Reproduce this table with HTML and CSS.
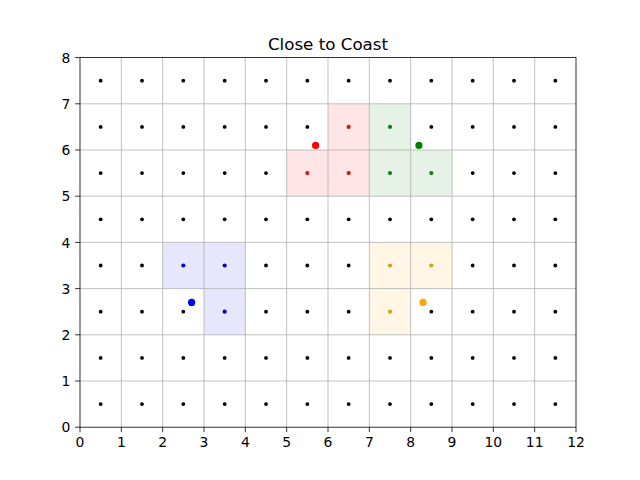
FILE: index.html
```html
<!DOCTYPE html>
<html>
<head>
<meta charset="utf-8">
<title>Close to Coast</title>
<link rel="stylesheet" href="styles.css">
</head>
<body>
<div class="figure">
<svg id="chart" class="chart" width="640" height="480" viewBox="0 0 640 480" xmlns="http://www.w3.org/2000/svg">
  <g id="cells"></g>
  <g id="grid" class="grid"></g>
  <g id="dots"></g>
  <g id="big"></g>
  <rect class="spine" x="80" y="57.6" width="496" height="369.6"></rect>
  <g id="ticks" class="ticks"></g>
  <g id="labels" class="labels"></g>
  <text class="title" x="328" y="49.5" text-anchor="middle">Close to Coast</text>
</svg>
</div>
<script src="script.js"></script>
</body>
</html>
```
FILE: styles.css
```css
html, body {
  margin: 0;
  padding: 0;
  background: #ffffff;
}
.figure {
  width: 640px;
  height: 480px;
  overflow: hidden;
}
.chart {
  display: block;
  font-family: "DejaVu Sans", "Liberation Sans", sans-serif;
}
.grid line {
  stroke: #b0b0b0;
  stroke-width: 0.8;
}
.spine {
  fill: none;
  stroke: #000000;
  stroke-width: 0.8;
}
.ticks line {
  stroke: #000000;
  stroke-width: 0.8;
}
.labels text {
  font-size: 13.9px;
  fill: #000000;
}
.title {
  font-size: 16.7px;
  fill: #000000;
}
```
FILE: script.js
```js
(function () {
  var NS = "http://www.w3.org/2000/svg";
  function X(x) { return 80 + x * 496 / 12; }
  function Y(y) { return 427.2 - y * 369.6 / 8; }
  function el(name, attrs, parent) {
    var e = document.createElementNS(NS, name);
    for (var k in attrs) e.setAttribute(k, attrs[k]);
    parent.appendChild(e);
    return e;
  }
  var groups = [
    { fill: "#ffe5e5", dot: "#cc1a1a", big: "#ff0000", bx: 5.7, by: 6.1,
      cells: [[5,5],[6,5],[6,6]] },
    { fill: "#e5f2e5", dot: "#1a7a1a", big: "#008000", bx: 8.2, by: 6.1,
      cells: [[7,5],[7,6],[8,5]] },
    { fill: "#e6e6fc", dot: "#0000d0", big: "#0000ff", bx: 2.7, by: 2.7,
      cells: [[2,3],[3,3],[3,2]] },
    { fill: "#fff6e5", dot: "#d0a020", big: "#ffa500", bx: 8.3, by: 2.7,
      cells: [[7,2],[7,3],[8,3]] }
  ];
  var cellsG = document.getElementById("cells");
  var gridG = document.getElementById("grid");
  var dotsG = document.getElementById("dots");
  var bigG = document.getElementById("big");
  var ticksG = document.getElementById("ticks");
  var labelsG = document.getElementById("labels");
  var colorOf = {};
  groups.forEach(function (g) {
    g.cells.forEach(function (c) {
      el("rect", { x: X(c[0]), y: Y(c[1] + 1), width: X(1) - X(0), height: Y(0) - Y(1), fill: g.fill }, cellsG);
      colorOf[c[0] + "," + c[1]] = g.dot;
    });
  });
  var i;
  for (i = 1; i < 12; i++) el("line", { x1: X(i), y1: Y(0), x2: X(i), y2: Y(8) }, gridG);
  for (i = 1; i < 8; i++) el("line", { x1: X(0), y1: Y(i), x2: X(12), y2: Y(i) }, gridG);
  for (var cx = 0; cx < 12; cx++) {
    for (var cy = 0; cy < 8; cy++) {
      var key = cx + "," + cy;
      var col = colorOf[key] || "#000000";
      el("circle", { cx: X(cx + 0.5), cy: Y(cy + 0.5), r: colorOf[key] ? 2.1 : 1.9, fill: col }, dotsG);
    }
  }
  groups.forEach(function (g) {
    el("circle", { cx: X(g.bx), cy: Y(g.by), r: 3.6, fill: g.big }, bigG);
  });
  for (i = 0; i <= 12; i++) {
    el("line", { x1: X(i), y1: Y(0), x2: X(i), y2: Y(0) + 4.9 }, ticksG);
    var t = el("text", { x: X(i), y: 447, "text-anchor": "middle" }, labelsG);
    t.textContent = String(i);
  }
  for (i = 0; i <= 8; i++) {
    el("line", { x1: X(0) - 4.9, y1: Y(i), x2: X(0), y2: Y(i) }, ticksG);
    var s = el("text", { x: 70.3, y: Y(i) + 5.1, "text-anchor": "end" }, labelsG);
    s.textContent = String(i);
  }
})();
```
